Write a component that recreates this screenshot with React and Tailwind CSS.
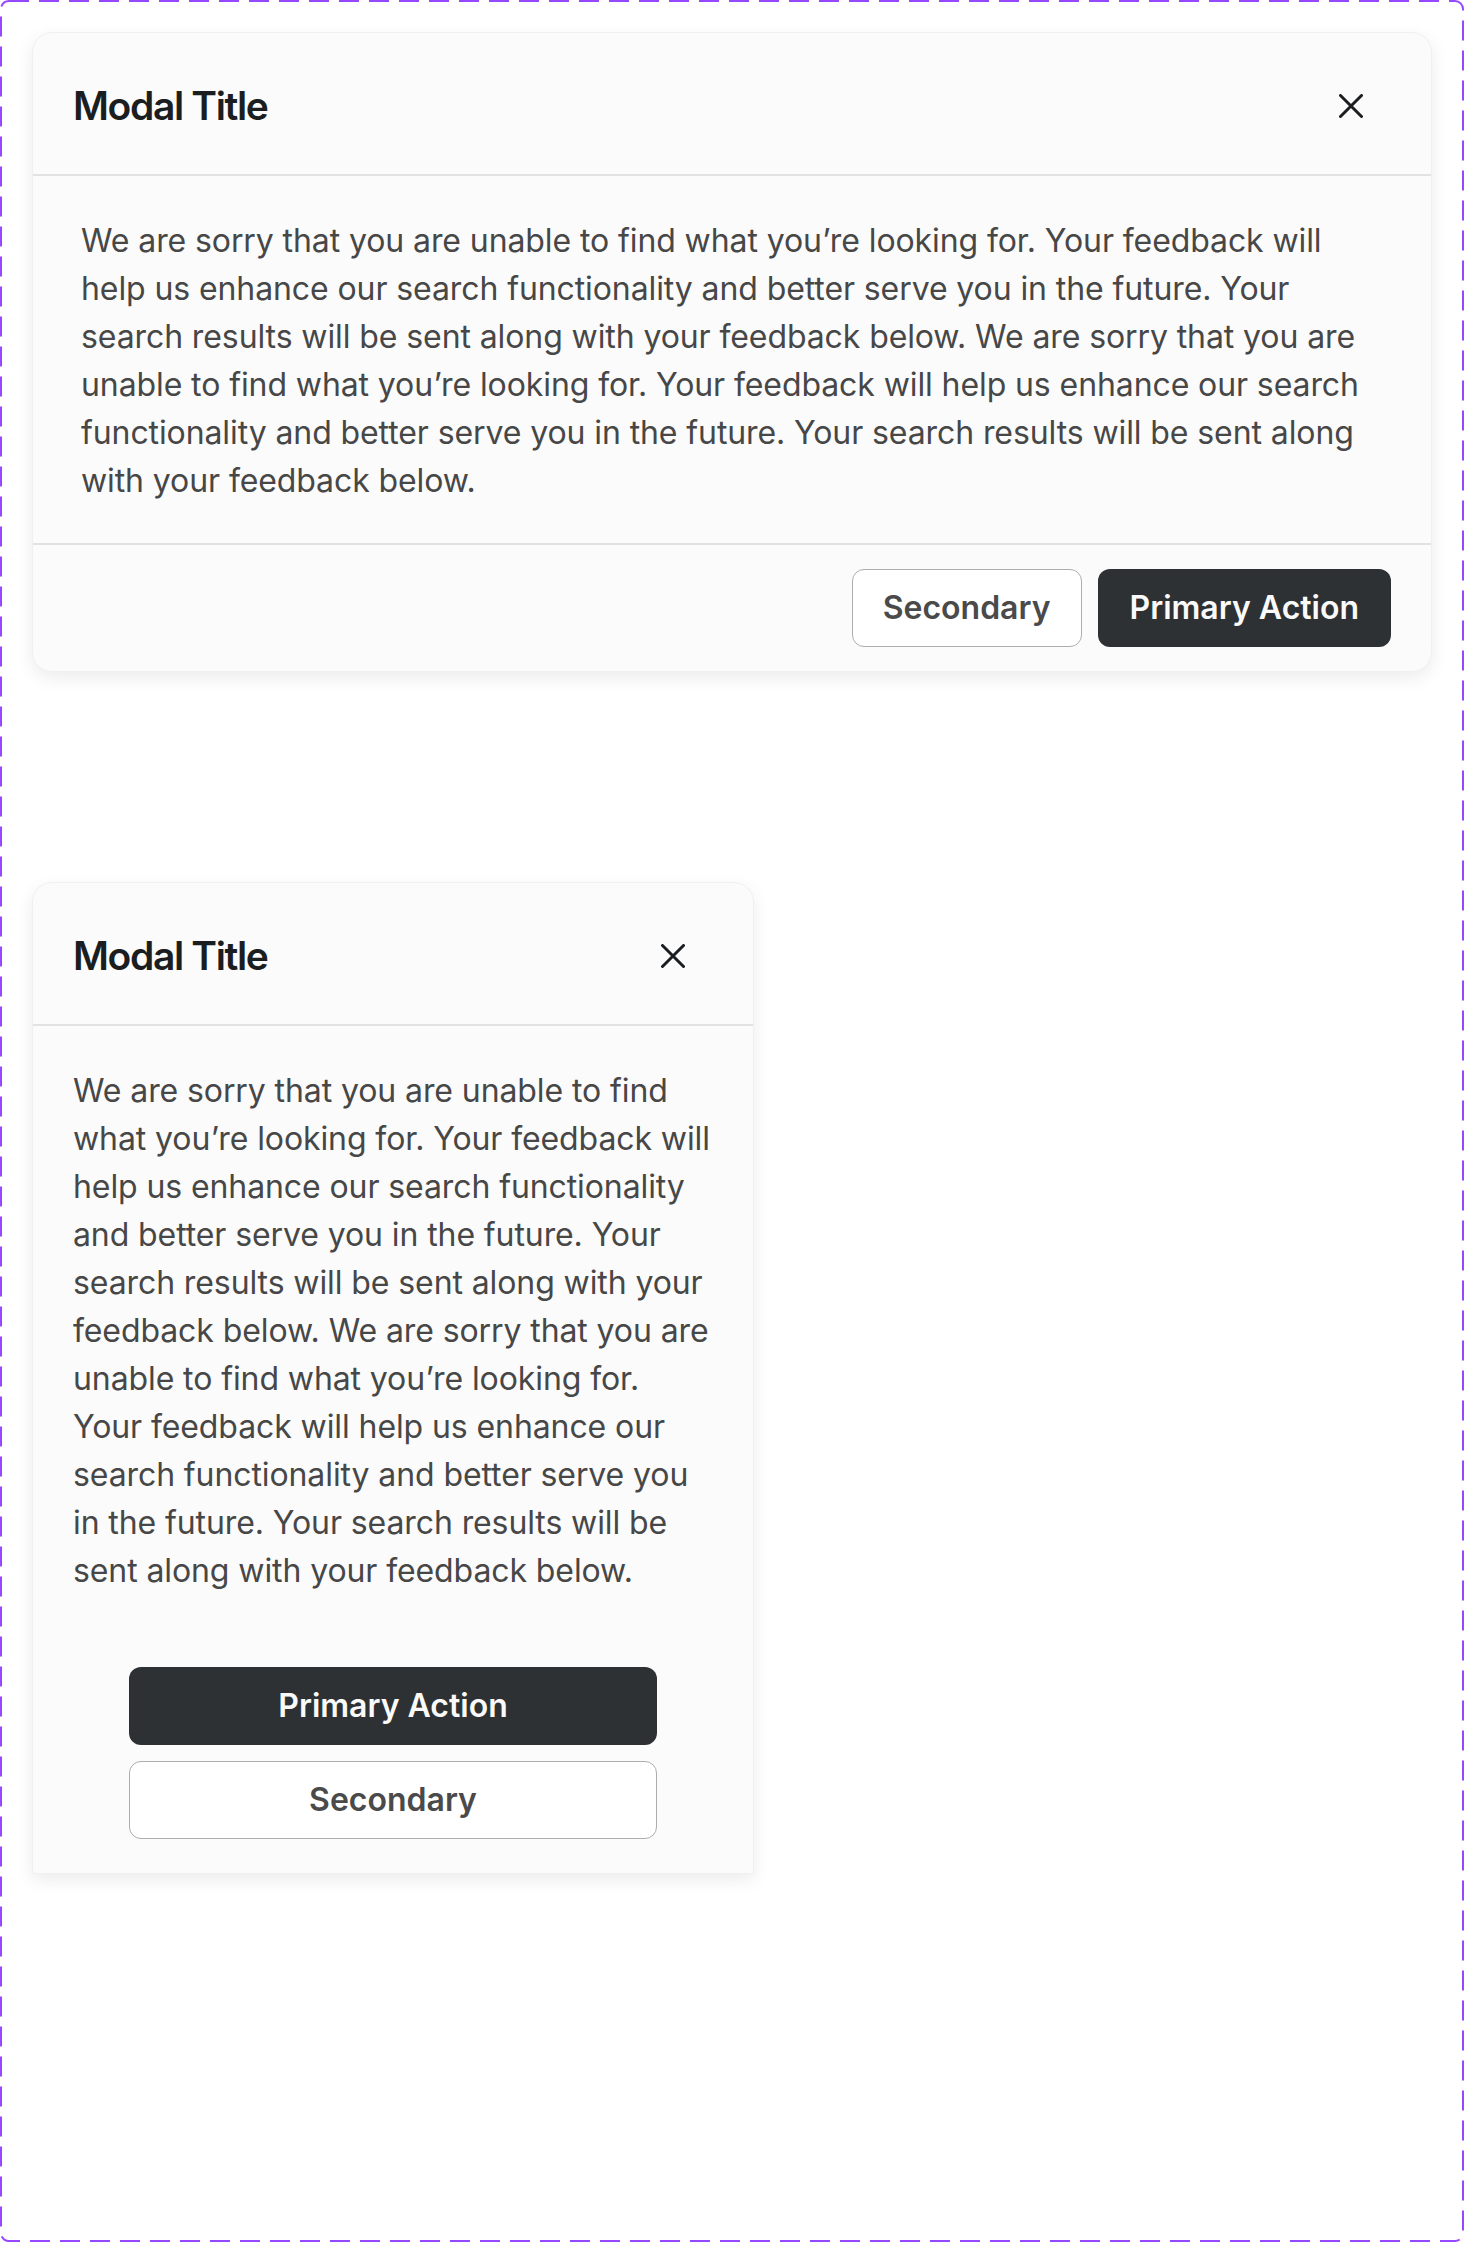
import React from "react";

const copy =
  "We are sorry that you are unable to find what you’re looking for. Your feedback will help us enhance our search functionality and better serve you in the future. Your search results will be sent along with your feedback below. We are sorry that you are unable to find what you’re looking for. Your feedback will help us enhance our search functionality and better serve you in the future. Your search results will be sent along with your feedback below.";

function CloseIcon() {
  return (
    <svg width="24" height="24" viewBox="0 0 24 24" fill="none" aria-hidden="true">
      <path
        d="M1.5 1.5 22.5 22.5 M22.5 1.5 1.5 22.5"
        stroke="#1b1e20"
        strokeWidth="3"
        strokeLinecap="round"
      />
    </svg>
  );
}

function ModalHeader() {
  return (
    <div className="flex h-[143px] items-center justify-between border-b-2 border-[#e2e2e2] pl-10 pr-14 pt-1">
      <h2 className="text-[39px] leading-none font-semibold tracking-[-0.035em] text-[#1b1e20]">
        Modal Title
      </h2>
      <button className="p-3">
        <CloseIcon />
      </button>
    </div>
  );
}

function PrimaryButton({ className = "" }) {
  return (
    <button
      className={`h-[78px] rounded-xl bg-[#2e3134] px-8 text-[32px] font-semibold text-[#fafafa] ${className}`}
    >
      Primary Action
    </button>
  );
}

function SecondaryButton({ className = "" }) {
  return (
    <button
      className={`h-[78px] rounded-xl border-[1.5px] border-[#adadad] bg-white px-[30px] text-[32px] font-semibold text-[#4a4a4a] ${className}`}
    >
      Secondary
    </button>
  );
}

export default function App() {
  return (
    <div className="relative h-[2242px] w-[1464px] bg-white font-['Inter',sans-serif]">
      {/* dashed frame */}
      <svg
        className="pointer-events-none absolute inset-0"
        width="1464"
        height="2242"
        aria-hidden="true"
      >
        <rect
          x="1"
          y="1"
          width="1462"
          height="2240"
          rx="8"
          fill="none"
          stroke="#9747ff"
          strokeWidth="2"
          strokeDasharray="20 10"
        />
      </svg>

      <div className="flex flex-col items-start gap-[210px] p-8">
        {/* Desktop modal */}
        <div className="w-full rounded-[20px] border border-[#f0f0f0] bg-[#fbfbfb] shadow-[0_6px_18px_rgba(0,0,0,0.08)]">
          <ModalHeader />
          <div className="border-b-2 border-[#e2e2e2] px-12 pt-[41px] pb-[38px]">
            <p className="text-[32px] leading-[48px] tracking-[-0.003em] text-[#474747]">{copy}</p>
          </div>
          <div className="flex items-center justify-end gap-4 px-10 py-6">
            <SecondaryButton />
            <PrimaryButton />
          </div>
        </div>

        {/* Mobile modal */}
        <div className="w-[722px] rounded-t-[20px] border border-[#f0f0f0] bg-[#fbfbfb] shadow-[0_6px_18px_rgba(0,0,0,0.08)]">
          <ModalHeader />
          <div className="px-10 pt-[41px] pb-10">
            <p className="text-[32px] leading-[48px] tracking-[-0.003em] text-[#474747]">{copy}</p>
          </div>
          <div className="flex flex-col gap-4 px-24 pt-[32px] pb-[34px]">
            <PrimaryButton className="w-full" />
            <SecondaryButton className="w-full" />
          </div>
        </div>
      </div>
    </div>
  );
}
